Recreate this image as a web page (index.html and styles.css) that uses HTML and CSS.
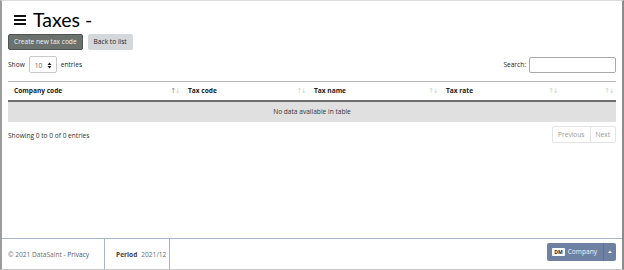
FILE: index.html
```html
<!DOCTYPE html>
<html>
<head>
<meta charset="utf-8">
<link rel="stylesheet" href="styles.css">
</head>
<body>
<div class="frame">
  <main class="content">
    <h1 class="title">
      <svg class="burger" width="12" height="10" viewBox="0 0 12 10"><rect x="0" y="0" width="12" height="2" fill="#111"/><rect x="0" y="4" width="12" height="2" fill="#111"/><rect x="0" y="8" width="12" height="2" fill="#111"/></svg>
      <span>Taxes -</span>
    </h1>
    <div class="actions">
      <button class="btn btn-dark">Create new tax code</button>
      <button class="btn btn-light">Back to list</button>
    </div>
    <div class="controls">
      <div class="length">Show <span class="select">10 <svg width="5" height="7" viewBox="0 0 5 7"><path d="M0.5 3L2.5 0.5L4.5 3Z M0.5 4L2.5 6.5L4.5 4Z" fill="#222"/></svg></span> entries</div>
      <div class="search">Search: <span class="input"></span></div>
    </div>
    <table class="grid">
      <thead>
        <tr>
          <th class="c1">Company code<span class="sort"><span class="on">↑</span>↓</span></th>
          <th class="c2">Tax code<span class="sort">↑↓</span></th>
          <th class="c3">Tax name<span class="sort">↑↓</span></th>
          <th class="c4">Tax rate<span class="sort">↑↓</span></th>
          <th class="c5"><span class="sort">↑↓</span></th>
        </tr>
      </thead>
      <tbody>
        <tr><td colspan="5" class="empty">No data available in table</td></tr>
      </tbody>
    </table>
    <div class="info-row">
      <div class="info">Showing 0 to 0 of 0 entries</div>
      <div class="pager"><span class="pg">Previous</span><span class="pg">Next</span></div>
    </div>
  </main>
  <footer class="footer">
    <div class="fcell copy"><span>© 2021 DataSaint - <a class="link">Privacy</a></span></div>
    <div class="fcell period"><b>Period</b> 2021/12</div>
    <div class="fspace"></div>
    <div class="company"><span class="cmain"><span class="dm">DM</span>Company</span><span class="ccaret"><svg width="4" height="3" viewBox="0 0 4 3"><path d="M0 3L2 0.5L4 3Z" fill="#fff"/></svg></span></div>
  </footer>
</div>
</body>
</html>
```
FILE: styles.css
```css
html, body { margin: 0; padding: 0; background: #fff; }
body { font-family: "Open Sans", "Noto Sans", sans-serif; font-size: 6.6px; color: #212529; }
.frame {
  width: 624px; height: 270px; box-sizing: border-box;
  border-top: 1px solid #dcdcdc; border-bottom: 1px solid #c8c8c8;
  border-left: 2px solid #9d9d9d; border-right: 2px solid #8c8c8c;
  display: flex; flex-direction: column;
}
.content { flex: 1; padding: 0 6px; }
.title {
  margin: 0; height: 33px; display: flex; align-items: center; gap: 7px;
  padding-left: 6px; padding-top: 3px; box-sizing: border-box;
  font-family: "Lato", "Open Sans", sans-serif; font-weight: normal; font-size: 19.5px; color: #000;
}
.burger { margin-top: 1px; }
.actions { display: flex; gap: 5px; height: 16px; }
.btn {
  font-family: inherit; font-size: 6.6px; border-radius: 2px; padding: 0 5px; height: 16px; line-height: 14px;
}
.btn-dark { background: #6b716c; color: #f4f4f4; border: 1px solid #4e544f; }
.btn-light { background: #d5d8db; color: #222; border: 1px solid #d5d8db; }
.controls { display: flex; justify-content: space-between; align-items: center; margin-top: 6px; height: 17px; }
.length { display: flex; align-items: center; gap: 4px; }
.select {
  display: inline-flex; align-items: center; justify-content: space-between; box-sizing: border-box;
  width: 28px; height: 17px; border: 1px solid #c9c9c9; border-radius: 2px; padding: 2px 4px 0 5px; color: #666;
}
.search { display: flex; align-items: center; gap: 3px; }
.input { display: block; width: 87px; height: 16px; box-sizing: border-box; border: 1px solid #a9a9a9; border-radius: 2px; }
.grid { width: 100%; border-collapse: collapse; margin-top: 8px; border-top: 1px solid #b5b5b5; }
.grid th {
  position: relative; text-align: left; font-weight: bold; height: 19px; padding: 0 6px; box-sizing: border-box;
  border-bottom: 2px solid #6f6f6f; font-size: 6.6px; color: #222;
}
.sort { position: absolute; right: 3px; top: 5px; font-size: 7px; color: #cfcfcf; font-weight: normal; letter-spacing: -1.5px; font-family: "DejaVu Sans", sans-serif; }
.sort .on { color: #888; }
.c1 { width: 174px; }
.c2 { width: 126px; }
.c3 { width: 132px; }
.c4 { width: 120px; }
.empty { background: #e0e0e0; text-align: center; height: 20px; padding: 0; font-size: 6.6px; color: #333; }
.info-row { display: flex; justify-content: space-between; align-items: center; margin-top: 4px; }
.info { color: #333; padding-top: 3px; }
.pager { display: flex; border: 1px solid #e3e3e3; border-radius: 2px; height: 17px; box-sizing: border-box; }
.pg { display: flex; align-items: center; padding: 0 5px; color: #9a9a9a; }
.pg + .pg { border-left: 1px solid #e3e3e3; }
.footer { height: 31px; border-top: 1px solid #a7b4c9; display: flex; align-items: center; box-sizing: border-box; }
.fcell { height: 100%; display: flex; align-items: center; color: #6c6c6c; }
.copy { width: 96px; padding-left: 6px; border-right: 1px solid #a7b4c9; }
.link { color: #3d4f7c; }
.period { padding: 0 3px 0 11px; border-right: 1px solid #a7b4c9; gap: 4px; }
.period b { color: #444; }
.fspace { flex: 1; }
.company {
  display: flex; height: 18px; margin-right: 6px; margin-top: -5px; background: #6e81a2; border-radius: 2px; color: #f2f4f8;
}
.cmain { display: flex; align-items: center; gap: 3px; padding: 0 6px 0 5px; }
.dm { background: #fff; color: #222; font-weight: bold; font-size: 5px; padding: 1px 2px; border-radius: 1px; }
.ccaret { display: flex; align-items: center; justify-content: center; width: 12px; border-left: 1px solid #5f7293; }
```
